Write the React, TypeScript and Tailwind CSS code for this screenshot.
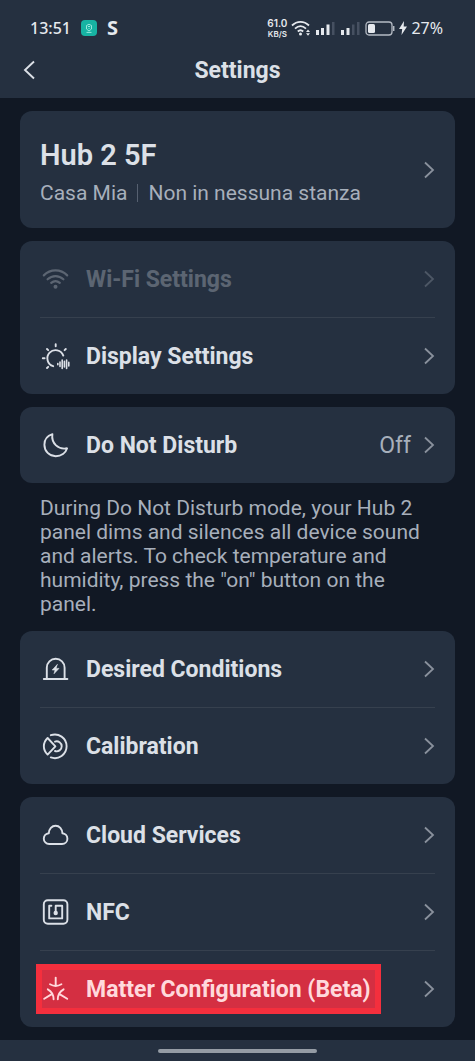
import type { ReactNode } from "react";
import clsx from "clsx";

const Icon = ({ children }: { children: ReactNode }) => (
  <svg
    viewBox="0 0 30 30"
    fill="none"
    stroke="currentColor"
    strokeWidth="1.9"
    strokeLinecap="round"
    strokeLinejoin="round"
    className="relative size-[30px] shrink-0"
    aria-hidden="true"
  >
    {children}
  </svg>
);

const WifiIcon = () => (
  <Icon>
    <path
      d="M3.8 11.4C10.4 4.8 20.6 4.8 27.2 11.4M7.6 15.3c4.6-4.3 11.2-4.3 15.8 0M11.2 18.9c2.6-2.2 6-2.2 8.6 0"
      strokeWidth="2.2"
    />
    <circle cx="15.5" cy="22.8" r="2" fill="currentColor" stroke="none" />
  </Icon>
);

const DisplayIcon = () => (
  <Icon>
    <path d="M13.2 25.2A8.2 8.2 0 1 1 23.3 14.6" />
    <path d="M15.7 3.3v2M2.8 17.2h1.8M7 8l1.2 1.2M25.8 8l-1.2 1.2M7 27l1.2-1.2" />
    <path
      d="M17.8 22.6v1.2M20 21v4.4M22.2 19v8.4M24.4 20.4v5.6M26.6 19v8.4M28.8 21.4v3.6"
      strokeWidth="1.6"
    />
  </Icon>
);

const MoonIcon = () => (
  <Icon>
    <path d="M12.4 4.2C7.6 5.7 4.4 9.7 4.4 14.8c0 6.5 5 11.4 11.3 11.4 5.6 0 10-3.2 11.4-7.9C18.5 20 11 13.5 12.4 4.2Z" />
  </Icon>
);

const ConditionsIcon = () => (
  <Icon>
    <path d="M3.8 25h23.6M6.8 25V13.7a8.9 8.9 0 0 1 17.8 0V25" />
    <path
      d="M17.2 10.6l-5 5.4h2.8l-1 3.8 5-5.4h-2.8z"
      fill="currentColor"
      strokeWidth="0.6"
    />
  </Icon>
);

const CalibrationIcon = () => (
  <Icon>
    <path d="M10.8 4.2a11.8 11.8 0 1 1 0 22.2" />
    <path d="M7.6 7L15.4 15.3 7.6 23.6C2.6 19 2.6 11.6 7.6 7Z" />
    <path d="M15 10.6a5 5 0 1 1 0 9.4" />
  </Icon>
);

const CloudIcon = () => (
  <Icon>
    <path d="M9.2 24C6 24 3.8 21.6 3.8 18.7c0-2.9 2.2-5.1 5-5.4C9 9 11.8 5.8 15.6 5.8s6.6 3.2 6.8 7.5c2.8.3 5 2.5 5 5.4 0 2.9-2.2 5.3-5.4 5.3Z" />
  </Icon>
);

const NfcIcon = () => (
  <Icon>
    <rect x="3.8" y="3.2" width="23.6" height="23.6" rx="4" />
    <path d="M11.4 8.8H9.2v12.6h13V8.8h-6.5v6.4" />
    <circle cx="15.7" cy="16" r="2.2" fill="currentColor" stroke="none" />
  </Icon>
);

const MatterIcon = () => (
  <Icon>
    <path d="M15.7 3.6v8M10 10.3c3.4 2 8 2 11.4 0" />
    <path d="M4.2 24.7l7.2-4.3M7.8 15.3c3.6 2 5.8 6 5.8 10" />
    <path d="M27.2 24.7L20 20.4M23.6 15.3c-3.6 2-5.8 6-5.8 10" />
  </Icon>
);

const Chevron = () => (
  <svg
    viewBox="0 0 12 18"
    fill="none"
    stroke="currentColor"
    strokeWidth="1.8"
    className="h-[18px] w-3 shrink-0 text-[#8a919d]"
    aria-hidden="true"
  >
    <path d="M2 1.5L10 9l-8 7.5" />
  </svg>
);

const Card = ({ children }: { children: ReactNode }) => (
  <section className="divide-y divide-[#36404e] rounded-xl bg-[#253040] px-5">
    {children}
  </section>
);

type RowProps = {
  icon: ReactNode;
  label: string;
  value?: string;
  disabled?: boolean;
  highlighted?: boolean;
};

const Row = ({ icon, label, value, disabled, highlighted }: RowProps) => (
  <div>
    <button
      type="button"
      disabled={disabled}
      className="flex h-[76px] w-full items-center justify-between"
    >
      <span
        className={clsx(
          "relative flex items-center gap-4",
          highlighted ? "text-[#ffd9dc]" : "text-[#dce0e7]",
          disabled && "opacity-30",
        )}
      >
        {highlighted && (
          <span className="absolute -inset-y-2.5 -left-1 -right-2.5 border-[6px] border-[#f42f3d] bg-[#d42f42]" />
        )}
        {icon}
        <span className="relative whitespace-nowrap pt-0.5 text-[23px] font-bold leading-7">
          {label}
        </span>
      </span>
      <span
        className={clsx("flex items-center gap-3", disabled && "opacity-40")}
      >
        {value && (
          <span className="pt-0.5 text-[23px] leading-7 text-[#a7afbb]">
            {value}
          </span>
        )}
        <Chevron />
      </span>
    </button>
  </div>
);

const StatusBar = () => (
  <div className="flex h-7 items-center justify-between pl-[30px] pr-8 text-[#e6e9ee]">
    <div className="flex items-center gap-2.5 font-['Noto_Sans',sans-serif]">
      <span className="text-base font-medium">13:51</span>
      <svg viewBox="0 0 16 16" className="size-4" fill="none" aria-hidden="true">
        <rect width="16" height="16" rx="4" fill="#17b3a3" />
        <path
          d="M5.5 5.5q2.5-2.5 5 0v3.5L8 11 5.5 9ZM5.5 12.4h5M7 6.5h2M8 8v1"
          stroke="#a5ece2"
          strokeWidth="0.9"
        />
      </svg>
      <span className="text-xl font-bold">S</span>
    </div>
    <div className="flex items-center gap-1 font-['Noto_Sans',sans-serif]">
      <span className="flex flex-col items-center font-[Inter,sans-serif] font-semibold">
        <span className="text-[10px] leading-3">61.0</span>
        <span className="text-[8px] leading-[10px]">KB/S</span>
      </span>
      <svg viewBox="0 0 20 16" className="h-4 w-5" fill="none" aria-hidden="true">
        <path
          d="M1 5.5C6 .6 13 .6 18 5.5M4 8.7c3.4-3.2 7.6-3.2 11 0M6.8 11.5c1.6-1.5 3.8-1.5 5.4 0"
          stroke="currentColor"
          strokeWidth="1.8"
        />
        <circle cx="9.5" cy="14" r="1.5" fill="currentColor" />
        <path d="M15 12l2-2.5 2 2.5ZM15 13.3l2 2.5 2-2.5Z" fill="currentColor" />
      </svg>
      <svg viewBox="0 0 46 14" className="h-3.5 w-[46px]" aria-hidden="true">
        <path
          d="M1 9h3v5H1zM6 7h3v7H6zM11.5 3.5h3V14h-3zM26 9h3v5h-3zM31.5 7h3v7h-3z"
          fill="currentColor"
        />
        <path d="M17 1h2.5v13H17zM37 3.5h2.5V14H37zM42 1h2.5v13H42z" fill="#465061" />
      </svg>
      <svg viewBox="0 0 30 15" className="h-[15px] w-[30px]" fill="none" aria-hidden="true">
        <rect x="1" y="1" width="26" height="13" rx="3" stroke="#b4bac3" strokeWidth="1.3" />
        <rect x="3" y="3" width="7" height="9" rx="1.5" fill="currentColor" />
        <path d="M28.7 5v5" stroke="#b4bac3" strokeWidth="1.5" />
      </svg>
      <svg viewBox="0 0 8 14" className="h-3.5 w-2" aria-hidden="true">
        <path d="M5 0L0 8h3.2L2.5 14 8 5.5H4.7Z" fill="currentColor" />
      </svg>
      <span className="text-base">27%</span>
    </div>
  </div>
);

export default function App() {
  return (
    <div className="flex min-h-screen flex-col bg-[#111824] font-[Roboto,sans-serif]">
      <header className="bg-[#253040] pt-3.5">
        <StatusBar />
        <div className="grid h-14 grid-cols-[1fr_auto_1fr] items-center px-[22px]">
          <button type="button" aria-label="Back" className="w-fit text-[#dce0e7]">
            <svg
              viewBox="0 0 14 20"
              className="h-5 w-3.5"
              fill="none"
              stroke="currentColor"
              strokeWidth="1.9"
              aria-hidden="true"
            >
              <path d="M12 1.5L3 10l9 8.5" />
            </svg>
          </button>
          <h1 className="pt-0.5 text-[23px] font-bold leading-7 text-[#dce0e7]">
            Settings
          </h1>
        </div>
      </header>

      <main className="flex grow flex-col gap-[13px] px-5 py-[13px]">
        <Card>
          <button
            type="button"
            className="flex h-[117px] w-full items-center justify-between text-left"
          >
            <span className="flex flex-col gap-2 pt-0.5">
              <span className="text-[29px] font-semibold leading-9 text-[#dce0e7]">
                Hub 2 5F
              </span>
              <span className="flex items-center gap-2.5 text-[21px] leading-6 text-[#a7afbb]">
                Casa Mia
                <span className="h-[18px] w-px bg-[#566070]" />
                Non in nessuna stanza
              </span>
            </span>
            <Chevron />
          </button>
        </Card>

        <Card>
          <Row icon={<WifiIcon />} label="Wi-Fi Settings" disabled />
          <Row icon={<DisplayIcon />} label="Display Settings" />
        </Card>

        <Card>
          <Row icon={<MoonIcon />} label="Do Not Disturb" value="Off" />
        </Card>

        <p className="px-5 pb-0.5 text-[21px] leading-6 text-[#a7afbb]">
          During Do Not Disturb mode, your Hub 2 panel dims and silences all
          device sound and alerts. To check temperature and humidity, press the
          "on" button on the panel.
        </p>

        <Card>
          <Row icon={<ConditionsIcon />} label="Desired Conditions" />
          <Row icon={<CalibrationIcon />} label="Calibration" />
        </Card>

        <Card>
          <Row icon={<CloudIcon />} label="Cloud Services" />
          <Row icon={<NfcIcon />} label="NFC" />
          <Row icon={<MatterIcon />} label="Matter Configuration (Beta)" highlighted />
        </Card>
      </main>

      <footer className="flex h-[21px] items-center justify-center bg-[#253040]">
        <span className="h-1 w-1/3 rounded-full bg-[#959ca5]" />
      </footer>
    </div>
  );
}
